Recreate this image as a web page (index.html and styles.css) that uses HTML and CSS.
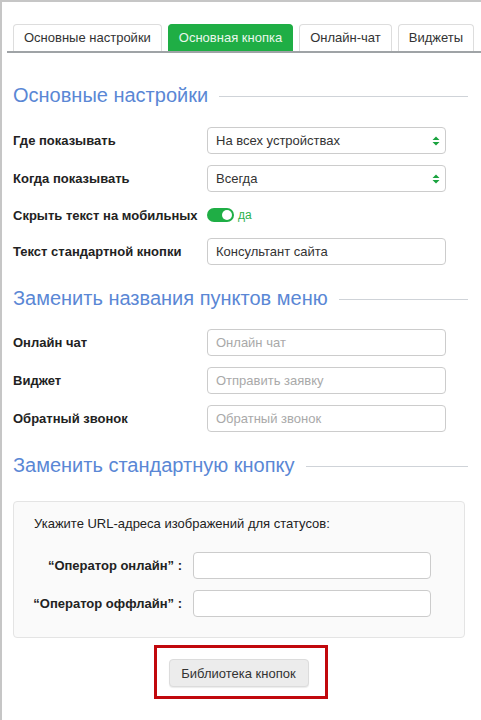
FILE: index.html
```html
<!DOCTYPE html>
<html lang="ru">
<head>
<meta charset="utf-8">
<title>Основная кнопка</title>
<link rel="stylesheet" href="styles.css">
</head>
<body>
<div class="frame">
  <div class="tabs">
    <div class="tab">Основные настройки</div>
    <div class="tab active">Основная кнопка</div>
    <div class="tab">Онлайн-чат</div>
    <div class="tab">Виджеты</div>
  </div>
  <div class="content">
    <h2 class="section first"><span>Основные настройки</span></h2>
    <div class="row">
      <label class="label">Где показывать</label>
      <div class="select"><span>На всех устройствах</span><svg class="arrows" width="8" height="10" viewBox="0 0 8 10"><path d="M4 0.5 L7.5 4 H0.5 Z M4 9.5 L7.5 6 H0.5 Z" fill="#1aa33f"/></svg></div>
    </div>
    <div class="row">
      <label class="label">Когда показывать</label>
      <div class="select"><span>Всегда</span><svg class="arrows" width="8" height="10" viewBox="0 0 8 10"><path d="M4 0.5 L7.5 4 H0.5 Z M4 9.5 L7.5 6 H0.5 Z" fill="#1aa33f"/></svg></div>
    </div>
    <div class="row toggle-row">
      <label class="label">Скрыть текст на мобильных</label>
      <div class="toggle-wrap"><span class="toggle"><span class="knob"></span></span><span class="yes">да</span></div>
    </div>
    <div class="row">
      <label class="label">Текст стандартной кнопки</label>
      <div class="input">Консультант сайта</div>
    </div>

    <h2 class="section"><span>Заменить названия пунктов меню</span></h2>
    <div class="row">
      <label class="label">Онлайн чат</label>
      <div class="input placeholder">Онлайн чат</div>
    </div>
    <div class="row">
      <label class="label">Виджет</label>
      <div class="input placeholder">Отправить заявку</div>
    </div>
    <div class="row">
      <label class="label">Обратный звонок</label>
      <div class="input placeholder">Обратный звонок</div>
    </div>

    <h2 class="section"><span>Заменить стандартную кнопку</span></h2>
    <div class="well">
      <p class="hint">Укажите URL-адреса изображений для статусов:</p>
      <div class="well-row">
        <label class="well-label">“Оператор онлайн” :</label>
        <div class="input well-input"></div>
      </div>
      <div class="well-row">
        <label class="well-label">“Оператор оффлайн” :</label>
        <div class="input well-input"></div>
      </div>
    </div>
    <div class="btn-area">
      <div class="highlight">
        <button class="btn">Библиотека кнопок</button>
      </div>
    </div>
  </div>
</div>
</body>
</html>
```

FILE: styles.css
```css
* { box-sizing: border-box; }
html, body {
  margin: 0;
  padding: 0;
  background: #fff;
}
body {
  font-family: "Liberation Sans", Arial, sans-serif;
  font-size: 13px;
  color: #333;
}
.frame {
  height: 720px;
  border-left: 2px solid #c6c6c6;
  border-top: 2px solid #c6c6c6;
  overflow: hidden;
}
.tabs {
  display: flex;
  gap: 6px;
  margin-top: 22px;
  margin-left: 5px;
  padding-left: 6px;
  border-bottom: 2px solid #9fa3a6;
  height: 29px;
  align-items: flex-end;
}
.tab {
  height: 27px;
  line-height: 26px;
  padding: 0 10px;
  border: 1px solid #ddd;
  border-bottom: none;
  border-radius: 4px 4px 0 0;
  color: #333;
  background: #fff;
  white-space: nowrap;
}
.tab.active {
  background: #1fae45;
  border-color: #1fae45;
  color: #e9f7ec;
}
.content {
  padding: 0 15px 0 11px;
  width: 481px;
}
.section {
  display: flex;
  align-items: center;
  margin: 21px 0 19px;
  height: 24px;
  font-size: 20px;
  font-weight: normal;
  color: #5a87d5;
  line-height: 24px;
}
.section.first { margin-top: 30px; margin-bottom: 20px; }
.section span { white-space: nowrap; }
.section::after {
  content: "";
  flex: 1;
  height: 1px;
  background: #cfd3d8;
  margin-left: 11px;
  margin-top: 2px;
}
.row {
  display: flex;
  align-items: center;
  height: 27px;
  margin-bottom: 11px;
}
.row.toggle-row { height: 24px; }
.label {
  width: 194px;
  flex: none;
  font-weight: bold;
  color: #222;
}
.select, .input {
  width: 239px;
  height: 27px;
  border: 1px solid #ccc;
  border-radius: 4px;
  background: #fff;
  padding: 0 8px;
  display: flex;
  align-items: center;
  color: #333;
}
.select { justify-content: space-between; padding-right: 5px; }
.placeholder { color: #a9a9a9; }
.toggle-wrap {
  display: flex;
  align-items: center;
  gap: 4px;
}
.toggle {
  width: 27px;
  height: 14px;
  border-radius: 7px;
  background: #1fae45;
  position: relative;
}
.knob {
  position: absolute;
  right: 2px;
  top: 2px;
  width: 10px;
  height: 10px;
  border-radius: 50%;
  background: #fff;
}
.yes { color: #2bb24c; font-size: 12px; }
.well {
  margin-top: 24px;
  background: #fafafa;
  border: 1px solid #e4e4e4;
  border-radius: 4px;
  padding: 14px 0 20px 20px;
  width: 452px;
}
.hint {
  margin: 0 0 20px;
  line-height: 16px;
  color: #222;
}
.well-row {
  display: flex;
  align-items: center;
  height: 27px;
  margin-top: 11px;
  margin-left: -14px;
}
.well-row:first-of-type { margin-top: 0; }
.well-label {
  width: 162px;
  text-align: right;
  font-weight: bold;
  color: #222;
  margin-right: 11px;
  flex: none;
  white-space: nowrap;
}
.well-input { width: 238px; }
.btn-area {
  display: flex;
  justify-content: center;
  margin-top: 7px;
  width: 452px;
  padding-left: 3px;
}
.highlight {
  border: 3px solid #c1080d;
  padding: 11px 16px 9px 12px;
}
.btn {
  width: 140px;
  height: 28px;
  border: 1px solid #dcdcdc;
  border-radius: 4px;
  background: #ececec;
  font-family: "Liberation Sans", Arial, sans-serif;
  font-size: 13px;
  color: #333;
  padding: 0;
  box-shadow: 0 1px 1px rgba(0,0,0,0.08);
}
```
